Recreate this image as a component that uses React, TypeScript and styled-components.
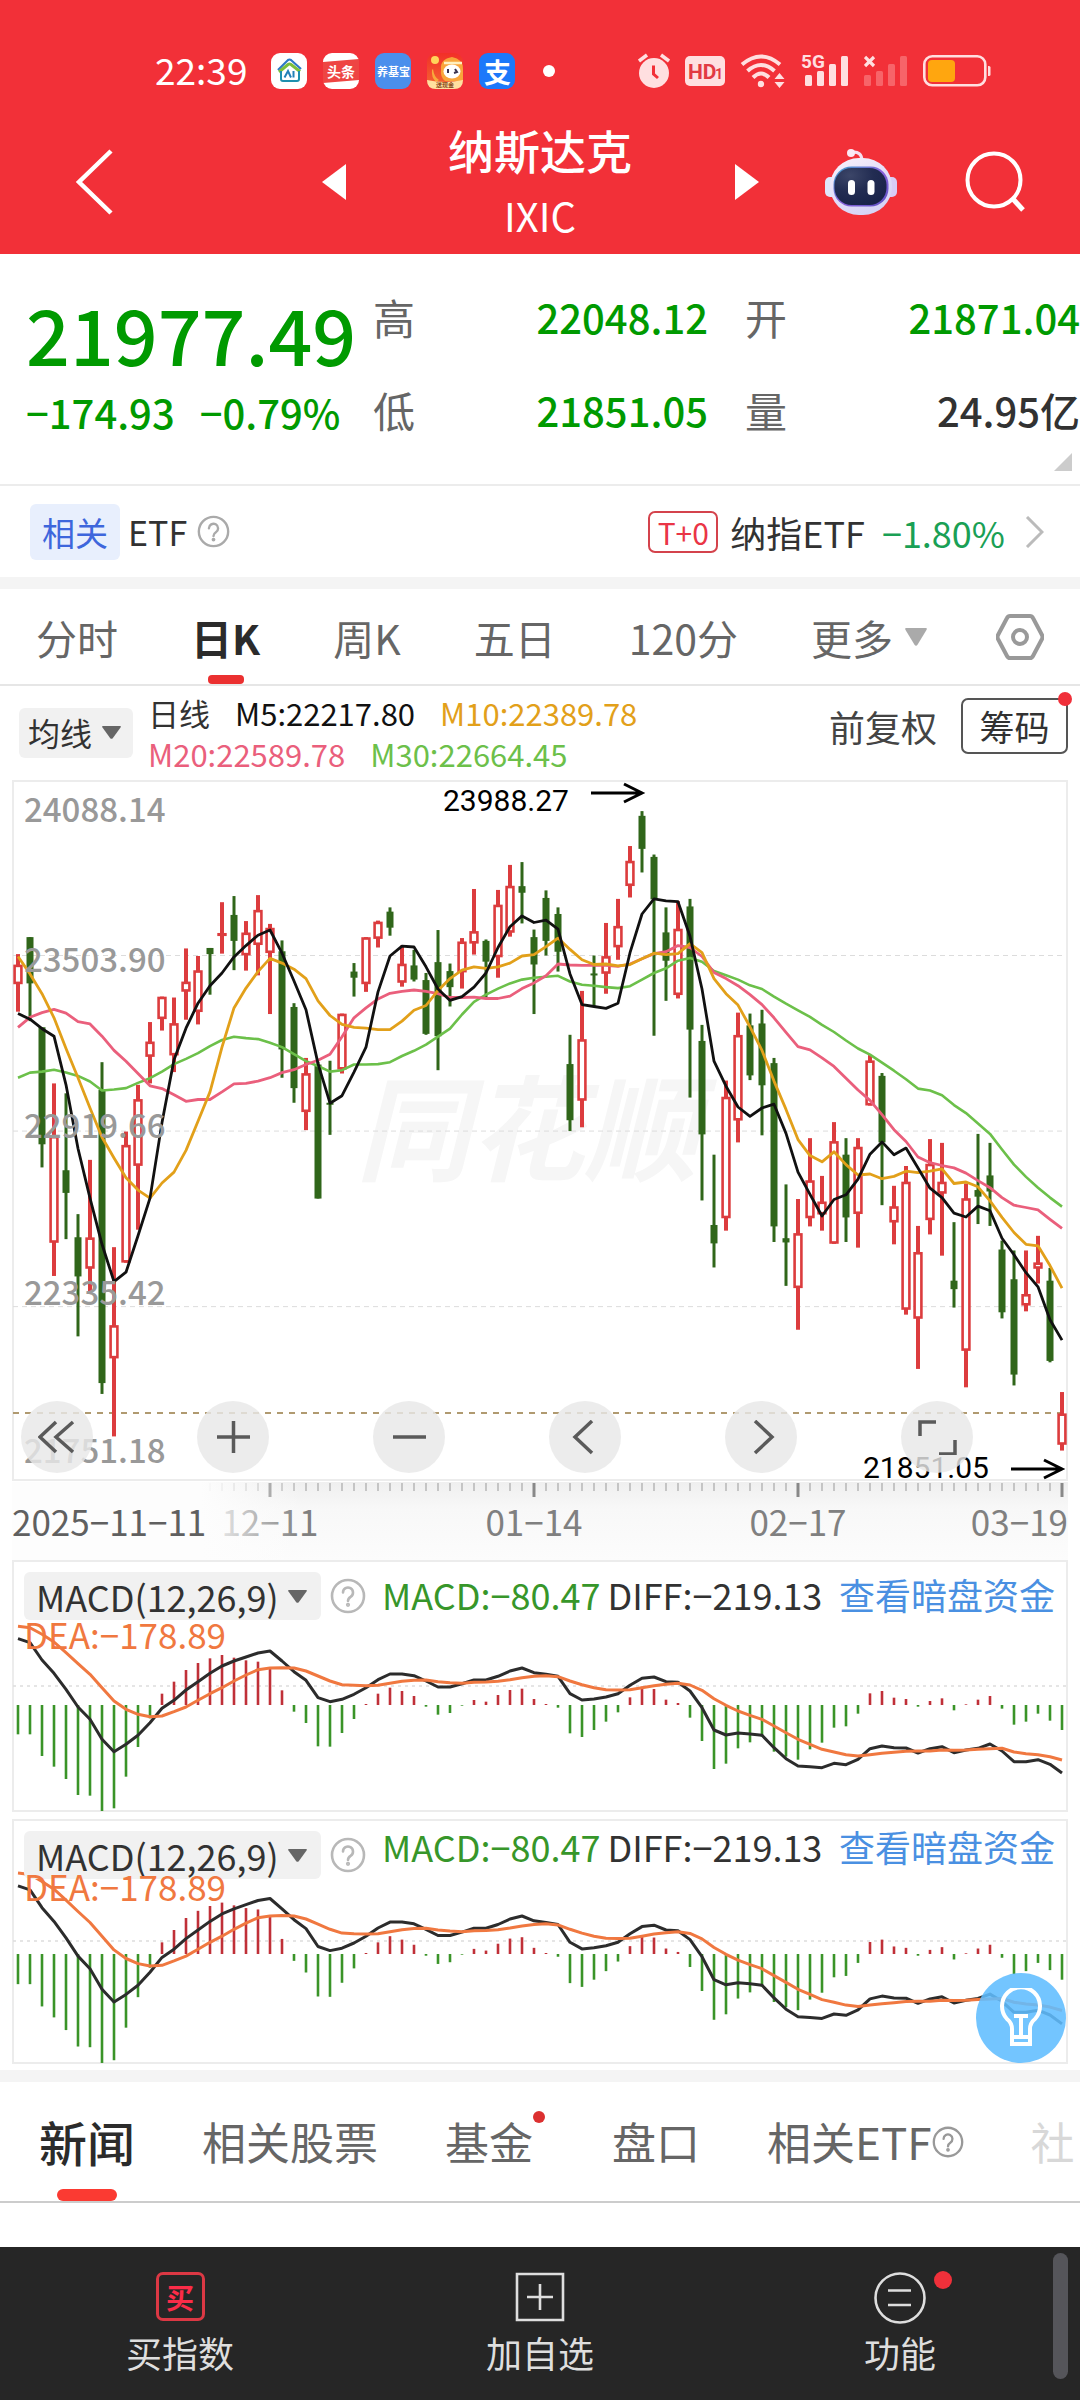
import React from "react";
import styled, { createGlobalStyle } from "styled-components";

const GlobalStyle = createGlobalStyle`
  * { box-sizing: border-box; }
  body {
    margin: 0;
    background: #fff;
    color: #323232;
    font-family: "Noto Sans CJK SC", "Noto Sans", sans-serif;
  }
  button, select { font: inherit; color: inherit; background: none; border: 0; padding: 0; margin: 0; cursor: pointer; }
  a { color: inherit; text-decoration: none; }
  svg { display: block; flex-shrink: 0; }
`;

/* ---------- market data ---------- */

type Candle = ["r" | "g", number, number, number, number];

// direction, high, body top, body bottom, low (chart levels, counted downwards)
const candles: Candle[] = [
  ["r", 388, 410, 452, 510], ["g", 352, 352, 450, 530], ["g", 543, 543, 791, 840], ["r", 662, 773, 1000, 1070],
  ["g", 683, 846, 894, 992], ["g", 939, 988, 1071, 1198], ["r", 824, 988, 1055, 1105], ["g", 617, 676, 1297, 1320],
  ["r", 1009, 1174, 1245, 1410], ["r", 764, 792, 1042, 1042], ["r", 665, 695, 837, 972], ["r", 532, 573, 606, 662],
  ["r", 478, 478, 526, 550], ["r", 480, 534, 603, 638], ["r", 376, 446, 468, 527], ["r", 392, 422, 511, 537],
  ["g", 375, 375, 388, 474], ["r", 278, 343, 350, 387], ["g", 265, 305, 360, 422], ["r", 318, 342, 391, 423],
  ["r", 263, 294, 369, 433], ["r", 324, 332, 386, 515], ["g", 359, 382, 590, 650], ["g", 492, 500, 672, 703],
  ["r", 608, 640, 723, 761], ["g", 616, 622, 906, 906], ["g", 614, 703, 707, 771], ["r", 514, 514, 633, 641],
  ["g", 407, 425, 438, 478], ["r", 352, 352, 452, 468], ["r", 317, 319, 356, 374], ["g", 289, 298, 332, 349],
  ["r", 370, 408, 449, 457], ["g", 379, 412, 442, 446], ["g", 428, 443, 557, 559], ["g", 337, 405, 562, 634],
  ["g", 408, 424, 458, 499], ["r", 354, 361, 427, 461], ["r", 250, 339, 366, 389], ["g", 357, 360, 404, 481],
  ["r", 252, 283, 395, 438], ["r", 199, 243, 343, 351], ["g", 193, 244, 258, 323], ["g", 336, 352, 410, 515],
  ["g", 253, 269, 360, 391], ["g", 289, 303, 383, 425], ["g", 559, 621, 740, 763], ["r", 466, 568, 699, 755],
  ["g", 391, 429, 433, 500], ["r", 322, 392, 430, 472], ["r", 271, 328, 374, 400], ["r", 159, 190, 244, 268],
  ["g", 85, 95, 165, 215], ["g", 177, 182, 272, 561], ["g", 289, 342, 402, 487], ["r", 276, 334, 475, 482],
  ["g", 271, 287, 548, 692], ["g", 538, 572, 770, 910], ["g", 813, 962, 1001, 1052], ["r", 656, 690, 948, 974],
  ["r", 512, 559, 741, 787], ["g", 514, 539, 645, 655], ["g", 506, 535, 666, 772], ["g", 608, 619, 965, 998],
  ["g", 876, 990, 999, 1091], ["r", 907, 979, 1096, 1184], ["r", 778, 867, 948, 965], ["r", 858, 912, 940, 974],
  ["r", 744, 784, 1002, 1002], ["g", 778, 813, 946, 998], ["r", 778, 796, 939, 1010], ["r", 602, 613, 709, 709],
  ["g", 640, 646, 787, 920], ["r", 879, 922, 957, 1003], ["r", 837, 870, 1142, 1152], ["r", 964, 1019, 1161, 1267],
  ["r", 780, 832, 952, 982], ["r", 788, 870, 896, 1027], ["g", 956, 1080, 1098, 1137], ["r", 874, 905, 1229, 1306],
  ["g", 769, 888, 902, 960], ["g", 788, 857, 891, 964], ["g", 995, 1014, 1147, 1160], ["g", 1016, 1077, 1279, 1302],
  ["r", 1016, 1108, 1133, 1145], ["r", 985, 1041, 1055, 1086], ["g", 1053, 1080, 1250, 1253], ["r", 1316, 1361, 1428, 1440],
];

const ma5 = [514, 526, 546, 562, 665, 800, 905, 1003, 1082, 1062, 985, 905, 745, 612, 545, 492, 455, 428, 394, 370, 348, 337, 386, 445, 506, 620, 704, 688, 638, 585, 468, 392, 371, 373, 415, 462, 486, 478, 458, 428, 374, 330, 307, 321, 316, 335, 430, 495, 499, 503, 492, 385, 303, 271, 275, 277, 350, 462, 615, 668, 712, 732, 714, 706, 768, 850, 897, 943, 908, 898, 865, 812, 786, 813, 799, 841, 884, 904, 937, 945, 922, 932, 990, 1025, 1063, 1093, 1163, 1206];
const ma10 = [393, 430, 472, 523, 588, 650, 714, 776, 820, 862, 888, 905, 873, 850, 804, 742, 680, 585, 502, 460, 425, 397, 407, 420, 440, 487, 518, 537, 543, 545, 548, 548, 530, 507, 497, 465, 440, 422, 415, 418, 415, 407, 392, 389, 372, 354, 378, 400, 410, 409, 413, 410, 398, 386, 389, 387, 366, 385, 440, 472, 496, 542, 592, 657, 717, 781, 815, 828, 807, 834, 856, 854, 864, 859, 848, 851, 848, 843, 874, 871, 881, 911, 946, 978, 1003, 1006, 1048, 1096];
const ma20 = [543, 522, 512, 505, 513, 531, 536, 562, 592, 615, 641, 667, 673, 686, 700, 696, 696, 680, 663, 662, 657, 650, 639, 633, 622, 613, 600, 563, 523, 502, 483, 471, 467, 464, 467, 472, 480, 480, 479, 482, 482, 477, 461, 449, 434, 409, 411, 412, 412, 412, 414, 409, 398, 387, 383, 370, 374, 393, 427, 440, 455, 474, 495, 523, 554, 584, 591, 608, 626, 651, 676, 698, 728, 760, 785, 818, 830, 836, 841, 852, 868, 883, 904, 920, 925, 930, 950, 969];
const ma30 = [650, 639, 637, 633, 639, 646, 658, 677, 675, 672, 661, 651, 637, 621, 610, 598, 583, 570, 563, 566, 568, 576, 585, 600, 615, 625, 637, 634, 622, 622, 621, 617, 604, 593, 580, 563, 546, 516, 489, 474, 461, 450, 442, 438, 436, 434, 446, 453, 455, 458, 460, 456, 442, 428, 418, 402, 396, 404, 424, 433, 442, 454, 462, 478, 493, 507, 521, 538, 553, 571, 588, 601, 618, 635, 653, 673, 677, 687, 708, 725, 747, 769, 802, 834, 860, 883, 904, 923];

const macdBars = [-88, -88, -153, -185, -222, -270, -272, -318, -310, -215, -126, -40, 34, 70, 105, 126, 140, 150, 142, 134, 130, 110, 44, -20, -54, -124, -125, -84, -42, 3, 34, 52, 42, 27, -5, -29, -24, -2, 15, 10, 30, 45, 49, 18, 3, -8, -85, -96, -75, -50, -22, 23, 55, 48, 16, 6, -38, -108, -192, -176, -130, -112, -95, -140, -155, -164, -133, -113, -68, -64, -26, 35, 42, 22, 18, -5, 12, 20, -16, 2, 16, 27, -11, -59, -50, -26, -47, -75];
const diff = [503, 515, 567, 607, 655, 708, 745, 805, 842, 820, 793, 755, 712, 688, 657, 632, 607, 585, 570, 558, 546, 540, 570, 602, 628, 680, 692, 685, 670, 650, 626, 609, 609, 614, 630, 648, 648, 638, 627, 627, 616, 600, 591, 605, 610, 616, 668, 687, 684, 678, 668, 643, 622, 618, 632, 634, 660, 710, 777, 792, 786, 789, 793, 830, 863, 885, 887, 890, 877, 881, 865, 833, 825, 830, 831, 846, 833, 827, 845, 837, 832, 819, 840, 872, 872, 866, 880, 906];
const dea = [466, 470, 490, 513, 545, 578, 610, 650, 690, 715, 730, 737, 735, 722, 708, 688, 668, 650, 630, 612, 596, 591, 590, 591, 600, 615, 630, 641, 643, 644, 643, 637, 631, 628, 627, 632, 635, 637, 634, 633, 631, 626, 620, 616, 614, 617, 630, 641, 650, 656, 657, 656, 650, 644, 640, 637, 642, 658, 683, 703, 720, 733, 745, 765, 785, 805, 820, 835, 843, 851, 855, 851, 847, 844, 841, 840, 840, 837, 838, 837, 835, 833, 832, 843, 848, 851, 857, 867];

const xAt = (i: number) => 6 + i * 12;
const levelY = (v: number) => v / 2.119 - 9;
const toPoints = (values: number[], y: (v: number) => number) =>
  values.map((v, i) => `${xAt(i)},${y(v).toFixed(1)}`).join(" ");

/* ---------- header ---------- */

const Page = styled.div`
  width: 100%;
  overflow-x: hidden;
  background: #fff;
`;

const TopArea = styled.header`
  background: #f23038;
  color: #fff;
  padding-top: 50px;
`;

const StatusBar = styled.div`
  display: flex;
  align-items: center;
  height: 42px;
  padding: 0 89px 0 155px;
`;

const Clock = styled.time`
  font-size: 37px;
  line-height: 36px;
  padding-bottom: 4px;
  margin-right: 24px;
`;

const StatusGroup = styled.div<{ $gap: number; $end?: boolean }>`
  display: flex;
  align-items: center;
  gap: ${(p) => p.$gap}px;
  margin-left: ${(p) => (p.$end ? "auto" : "0")};
`;

const AppBadge = styled.span<{ $bg: string; $size: number }>`
  display: flex;
  align-items: center;
  justify-content: center;
  width: 36px;
  height: 36px;
  border-radius: 9px;
  background: ${(p) => p.$bg};
  font-size: ${(p) => p.$size}px;
  line-height: 1;
  font-weight: 700;
  white-space: nowrap;
`;

const MoreDot = styled.span`
  width: 12px;
  height: 12px;
  margin-left: 12px;
  border-radius: 50%;
  background: #fff;
`;

const TitleBar = styled.div`
  display: grid;
  grid-template-columns: 1fr 437px 1fr;
  align-items: center;
  height: 162px;
  padding-top: 17px;
`;

const TitleSide = styled.div<{ $end?: boolean }>`
  display: flex;
  align-items: center;
  justify-content: ${(p) => (p.$end ? "flex-end" : "flex-start")};
  gap: 68px;
  padding: ${(p) => (p.$end ? "0 54px 0 0" : "0 0 0 74px")};
`;

const TitleCenter = styled.div`
  display: flex;
  align-items: center;
  justify-content: space-between;
`;

const TitleText = styled.div`
  text-align: center;
`;

const IndexName = styled.h1`
  margin: 0;
  font-size: 46px;
  line-height: 60px;
  font-weight: 500;
`;

const IndexCode = styled.div`
  font-size: 40px;
  line-height: 60px;
  padding-top: 6px;
`;

/* ---------- quote ---------- */

const Quote = styled.section`
  position: relative;
  display: flex;
  height: 232px;
  padding-left: 26px;
  border-bottom: 2px solid #ececec;
`;

const PriceBlock = styled.div`
  width: 347px;
  padding-top: 36px;
  color: #009a00;
  font-weight: 500;
  white-space: nowrap;
`;

const Price = styled.div`
  font-size: 77px;
  line-height: 86px;
`;

const Change = styled.div`
  display: flex;
  gap: 25px;
  margin-top: 8px;
  font-size: 40px;
  line-height: 56px;
`;

const Stats = styled.dl`
  flex: 1;
  display: grid;
  grid-template-columns: 42px 1fr 79px 1fr;
  grid-template-rows: 93px 93px;
  align-items: center;
  margin: 0;
  padding-top: 16px;
`;

const StatLabel = styled.dt`
  font-size: 42px;
  line-height: 60px;
  color: #666;
  text-align: right;
`;

const StatValue = styled.dd<{ $plain?: boolean }>`
  margin: 0;
  font-size: 40px;
  line-height: 60px;
  font-weight: 500;
  text-align: right;
  white-space: nowrap;
  color: ${(p) => (p.$plain ? "#323232" : "#009a00")};
`;

const CornerMark = styled.span`
  position: absolute;
  right: 8px;
  bottom: 13px;
  border-left: 18px solid transparent;
  border-bottom: 18px solid #ccc;
`;

const EtfRow = styled.section`
  display: flex;
  align-items: center;
  height: 91px;
  padding: 0 36px 0 30px;
`;

const RelatedTag = styled.span`
  padding: 0 12px;
  margin-right: 8px;
  border-radius: 6px;
  background: #e8effd;
  color: #3e66dc;
  font-size: 33px;
  line-height: 56px;
`;

const EtfTitle = styled.span`
  font-size: 34px;
  line-height: 50px;
  margin-right: 10px;
`;

const EtfLink = styled.a`
  display: flex;
  align-items: center;
  margin-left: auto;
  font-size: 36px;
  line-height: 50px;
`;

const TradeTag = styled.span`
  width: 70px;
  margin-right: 12px;
  border: 2px solid #d4434c;
  border-radius: 7px;
  color: #ea3546;
  font-size: 30px;
  line-height: 38px;
  text-align: center;
`;

const EtfChange = styled.span`
  margin: 0 20px 0 17px;
  color: #1aa055;
`;

const Band = styled.div`
  height: 12px;
  background: #f4f4f4;
`;

/* ---------- period tabs ---------- */

const PeriodBar = styled.nav`
  display: flex;
  justify-content: space-between;
  height: 97px;
  padding: 0 36px;
  border-bottom: 2px solid #e6e6e6;
`;

const PeriodTabs = styled.div`
  display: flex;
  align-items: stretch;
  gap: 73px;
`;

const PeriodTab = styled.button<{ $active?: boolean }>`
  position: relative;
  font-size: 41px;
  line-height: 92px;
  white-space: nowrap;
  color: ${(p) => (p.$active ? "#2b2b2b" : "#666")};
  font-weight: ${(p) => (p.$active ? 700 : 400)};
  &::after {
    content: "";
    display: ${(p) => (p.$active ? "block" : "none")};
    position: absolute;
    left: calc(50% - 18px);
    bottom: 0;
    width: 36px;
    height: 9px;
    border-radius: 4px;
    background: #eb3030;
  }
`;

const DropDown = styled.label<{ $gap: number }>`
  display: flex;
  align-items: center;
  gap: ${(p) => p.$gap}px;
  white-space: nowrap;
  select { appearance: none; outline: none; }
`;

const MoreSelect = styled(DropDown)`
  font-size: 41px;
  line-height: 92px;
  color: #666;
`;

/* ---------- moving averages ---------- */

const AverageBar = styled.section`
  display: flex;
  align-items: center;
  height: 94px;
  padding: 0 12px 0 19px;
`;

const AverageSelect = styled(DropDown)`
  height: 50px;
  padding: 0 12px 2px 9px;
  margin-right: 15px;
  border-radius: 6px;
  background: #f1f1f1;
  font-size: 32px;
  line-height: 46px;
`;

const AverageValues = styled.div`
  font-size: 31px;
  line-height: 41px;
  white-space: nowrap;
`;

const AverageLine = styled.div`
  display: flex;
  gap: 25px;
`;

const Colored = styled.span<{ $color: string }>`
  color: ${(p) => p.$color};
`;

const AdjustButton = styled.button`
  margin: 0 24px 14px auto;
  font-size: 36px;
  line-height: 50px;
  color: #444;
`;

const ChipButton = styled.button`
  position: relative;
  width: 107px;
  margin-bottom: 14px;
  border: 2px solid #555;
  border-radius: 7px;
  font-size: 35px;
  line-height: 52px;
`;

const Badge = styled.span<{ $top: number; $right: number; $size: number }>`
  position: absolute;
  top: ${(p) => p.$top}px;
  right: ${(p) => p.$right}px;
  width: ${(p) => p.$size}px;
  height: ${(p) => p.$size}px;
  border-radius: 50%;
  background: #f0303a;
`;

/* ---------- charts ---------- */

const Charts = styled.section`
  position: relative;
  padding: 0 12px 6px;
`;

const ChartBox = styled.div`
  position: relative;
`;

const Drawing = styled.svg`
  width: 100%;
  height: auto;
`;

const ChartControls = styled.div`
  position: absolute;
  left: 9px;
  right: 95px;
  bottom: 9px;
  display: flex;
  justify-content: space-between;
`;

const RoundButton = styled.button`
  display: flex;
  align-items: center;
  justify-content: center;
  width: 72px;
  height: 72px;
  border-radius: 50%;
  background: rgba(232, 232, 232, 0.82);
`;

const Panel = styled.div<{ $gapAbove?: boolean }>`
  display: grid;
  margin-top: ${(p) => (p.$gapAbove ? 7 : 0)}px;
  & > * { grid-area: 1 / 1; }
`;

const PanelHead = styled.div`
  padding: 12px 13px 0 12px;
`;

const PanelRow = styled.div`
  display: flex;
  align-items: center;
  height: 48px;
  font-size: 36px;
  white-space: nowrap;
`;

const IndicatorSelect = styled(DropDown)`
  height: 48px;
  padding: 0 14px 0 12px;
  border-radius: 6px;
  background: #f1f1f1;
  line-height: 46px;
`;

const HelpButton = styled.button`
  margin: 0 16px 0 9px;
`;

const PanelValues = styled.div<{ $raised?: boolean }>`
  flex: 1;
  display: flex;
  gap: 7px;
  align-self: flex-start;
  line-height: ${(p) => (p.$raised ? 31 : 44)}px;
`;

const FundLink = styled.a`
  margin-left: auto;
  color: #4a90e2;
`;

const PanelSub = styled.div<{ $raised?: boolean }>`
  margin-top: ${(p) => (p.$raised ? -9 : -2)}px;
  font-size: 35px;
  line-height: 32px;
  color: #f07840;
`;

const BulbButton = styled.button`
  position: absolute;
  right: 14px;
  bottom: 7px;
  width: 90px;
  height: 90px;
  display: flex;
  align-items: center;
  justify-content: center;
  border-radius: 50%;
  background: rgba(96, 189, 255, 0.88);
`;

/* ---------- news tabs and bottom bar ---------- */

const NewsTabs = styled.nav`
  display: flex;
  gap: 67px;
  height: 121px;
  padding-left: 39px;
  border-bottom: 2px solid #ccc;
  overflow: hidden;
`;

const NewsTab = styled.button<{ $active?: boolean; $faded?: boolean }>`
  position: relative;
  display: flex;
  align-items: center;
  flex-shrink: 0;
  font-size: ${(p) => (p.$active ? 48 : 44)}px;
  line-height: 117px;
  color: ${(p) => (p.$active ? "#2b2b2b" : p.$faded ? "#d8d8d8" : "#666")};
  font-weight: ${(p) => (p.$active ? 500 : 400)};
  &::after {
    content: "";
    display: ${(p) => (p.$active ? "block" : "none")};
    position: absolute;
    left: calc(50% - 30px);
    bottom: 0;
    width: 60px;
    height: 12px;
    border-radius: 6px;
    background: #fb3a32;
  }
`;

const InlineDot = styled.span`
  align-self: flex-start;
  width: 12px;
  height: 12px;
  margin: 29px 0 0 0;
  border-radius: 50%;
  background: #dc3030;
`;

const NewsBody = styled.main`
  height: 44px;
`;

const BottomBar = styled.footer`
  position: relative;
  display: grid;
  grid-template-columns: repeat(3, 1fr);
  height: 153px;
  background: #262626;
  color: #dedede;
`;

const BottomItem = styled.button`
  display: flex;
  flex-direction: column;
  align-items: center;
  gap: 4px;
  padding-top: 25px;
  font-size: 36px;
  line-height: 52px;
`;

const BottomIcon = styled.span`
  position: relative;
  height: 50px;
`;

const BuyIcon = styled.span`
  display: flex;
  align-items: center;
  justify-content: center;
  width: 49px;
  height: 49px;
  border: 3px solid #dc3844;
  border-radius: 7px;
  color: #fb2c48;
  font-size: 28px;
  line-height: 1;
  font-weight: 700;
`;

const ScrollThumb = styled.span`
  position: absolute;
  right: 12px;
  top: 6px;
  width: 15px;
  height: 126px;
  border-radius: 8px;
  background: #55555a;
`;

/* ---------- icons ---------- */

const Caret = ({ color, width, height }: { color: string; width: number; height: number }) => (
  <svg width={width} height={height} viewBox="0 0 20 18" preserveAspectRatio="none" aria-hidden="true">
    <path d="M1 0H19Q20.500 0 19.500 2L11.500 16.500Q10 19 8.500 16.500L.5 2Q-.5 0 1 0Z" fill={color} />
  </svg>
);

const QuestionIcon = ({ size, color = "#aaa" }: { size: number; color?: string }) => (
  <svg width={size} height={size} viewBox="0 0 36 36" fill="none" stroke={color} strokeWidth="2.600" aria-hidden="true">
    <circle cx="18" cy="18" r="16" />
    <path d="M13 14.500a5 5 0 1 1 7.600 4.300c-1.800 1.100-2.600 1.900-2.600 4.200" strokeLinecap="round" />
    <circle cx="18" cy="26.800" r=".8" fill={color} />
  </svg>
);

const HouseIcon = () => (
  <svg width="36" height="36" viewBox="0 0 36 36" fill="none">
    <rect width="36" height="36" rx="9" fill="#fff" />
    <path d="M7 17L17 7q1.500-1 3 0l10 9" stroke="#2d78c8" strokeWidth="2.200" />
    <path d="M8 19L17 11.500q1.500-1 3 0l9 7" stroke="#7bbf3c" strokeWidth="3" />
    <path d="M10 18v8q0 2 2 2h14q2 0 2-2v-8" stroke="#1e8fae" strokeWidth="2" />
    <path d="M13.500 24.500L17 18l3 6.500M22.500 18v6.500" stroke="#2380b8" strokeWidth="2" />
  </svg>
);

const HeadlineIcon = () => (
  <svg width="36" height="36" viewBox="0 0 36 36">
    <rect width="36" height="36" rx="9" fill="#fff" />
    <path d="M0 9L36 6V27L0 30Z" fill="#ee4543" />
    <text x="18" y="24" textAnchor="middle" fontSize="14" fontWeight="700" fill="#fff">头条</text>
  </svg>
);

const MascotIcon = () => (
  <svg width="36" height="36" viewBox="0 0 36 36">
    <defs>
      <linearGradient id="mascotBg" x1="0" y1="0" x2="0" y2="1">
        <stop offset="0" stopColor="#f22f28" />
        <stop offset="1" stopColor="#f46a32" />
      </linearGradient>
    </defs>
    <rect width="36" height="36" rx="9" fill="url(#mascotBg)" />
    <path d="M6 16q1 8 6 11l-3 2q-5-5-4-12z" fill="#f8a93c" />
    <circle cx="8" cy="7" r="4" fill="#ffd45a" />
    <path d="M14 16q-1-10 11-12 11 2 11 12v12H18q-5-4-4-12z" fill="#f9a53b" />
    <path d="M17 10h18" stroke="#fff0c0" strokeWidth="2.500" />
    <ellipse cx="25" cy="18.500" rx="8.500" ry="7" fill="#fff" />
    <path d="M21 16v4M28 16l2 3-3 1" stroke="#3a3350" strokeWidth="2" fill="none" />
    <path d="M0 27q18 4 36 0q0 9-9 9H9q-9 0-9-9z" fill="#ffe0a0" />
    <text x="18" y="34" textAnchor="middle" fontSize="6" fontWeight="700" fill="#8a4a20">送现金</text>
  </svg>
);

const AlarmIcon = () => (
  <svg width="32" height="36" viewBox="0 0 32 36" fill="none">
    <circle cx="16" cy="20" r="15" fill="#ffdfe0" />
    <path d="M1 8l8-6M31 8l-8-6" stroke="#ffdfe0" strokeWidth="3.500" />
    <path d="M15.500 12.500v8.500l4.500 4" stroke="#f23038" strokeWidth="3" />
  </svg>
);

const HdIcon = () => (
  <svg width="40" height="30" viewBox="0 0 40 30">
    <rect width="40" height="30" rx="5" fill="#ffdfe0" />
    <text x="3" y="22.500" fontFamily="Roboto" fontSize="21" fontWeight="700" fill="#e23a42">HD</text>
    <text x="30" y="22.500" fontFamily="Roboto" fontSize="14" fontWeight="700" fill="#e23a42">1</text>
  </svg>
);

const WifiIcon = () => (
  <svg width="46" height="36" viewBox="0 0 46 36" fill="none" stroke="#ffdfe0" strokeWidth="4">
    <path d="M2 11.500q19-16 38 0" />
    <path d="M7.500 18q13.500-12 27 0" />
    <path d="M13 24.500q8-8 16 0" />
    <circle cx="21" cy="31" r="3.200" fill="#ffdfe0" stroke="none" />
    <path d="M39.500 20l5 6h-10zM39.500 35l5-6h-10z" fill="#ffdfe0" stroke="none" />
  </svg>
);

const SignalIcon = ({ empty }: { empty?: boolean }) => (
  <svg width={empty ? 44 : 48} height="36" viewBox={empty ? "0 0 44 36" : "0 0 48 36"}>
    {[0, 1, 2, 3].map((i) => {
      const h = [11, 15, 22, 30][i];
      return <rect key={i} x={(empty ? 0 : 4) + i * 12} y={33 - h} width="7" height={h} rx="1.500" fill={empty ? "#f76469" : "#ffdfe0"} />;
    })}
    {empty ? (
      <path d="M1 4l9 9M10 4l-9 9" stroke="#ffdfe0" strokeWidth="3.200" />
    ) : (
      <text x="0" y="15" fontFamily="Roboto" fontSize="19" fontWeight="700" fill="#ffdfe0">5G</text>
    )}
  </svg>
);

const BatteryIcon = () => (
  <svg width="68" height="32" viewBox="0 0 68 32" fill="none">
    <rect x="1.300" y="1.300" width="61" height="29" rx="8" stroke="#ffdfe0" strokeWidth="2.600" />
    <rect x="5" y="5" width="27" height="22" rx="4" fill="#ffa60f" />
    <path d="M65 11h1q1.500 0 1.500 1.500v7q0 1.500-1.500 1.500h-1z" fill="#ffdfe0" />
  </svg>
);

const RobotIcon = () => (
  <svg width="72" height="68" viewBox="0 0 72 68" fill="none">
    <defs>
      <linearGradient id="shell" x1="0" y1="0" x2=".6" y2="1">
        <stop offset="0" stopColor="#fbf4fb" />
        <stop offset=".6" stopColor="#e2dcf8" />
        <stop offset="1" stopColor="#d6d4f6" />
      </linearGradient>
      <linearGradient id="visorEdge" x1="0" y1="0" x2="1" y2="1">
        <stop offset="0" stopColor="#3aa0c8" />
        <stop offset=".5" stopColor="#8a62dc" />
        <stop offset="1" stopColor="#5a50c0" />
      </linearGradient>
      <radialGradient id="visor" cx=".3" cy=".2" r=".9">
        <stop offset="0" stopColor="#3c4668" />
        <stop offset=".5" stopColor="#222c52" />
        <stop offset="1" stopColor="#182248" />
      </radialGradient>
    </defs>
    <path d="M26 4.500q11-2 11 9" stroke="#f6dff0" strokeWidth="3.200" />
    <circle cx="26" cy="5" r="4" fill="#fbe8f4" />
    <rect x="0" y="29" width="12" height="20" rx="5" fill="#dfe6fa" />
    <rect x="60" y="29" width="12" height="20" rx="5" fill="#d8ccf6" />
    <rect x="5" y="10" width="62" height="57" rx="29" fill="url(#shell)" />
    <rect x="8.500" y="18.500" width="55" height="40" rx="18" fill="url(#visorEdge)" />
    <rect x="9.500" y="20" width="52" height="37" rx="17" fill="url(#visor)" />
    <rect x="23" y="32" width="7" height="15" rx="3.500" fill="#fff" />
    <rect x="42.500" y="32" width="7" height="15" rx="3.500" fill="#fff" />
  </svg>
);

const CONTROL_ICONS: [string, string][] = [
  ["最早", "M18 2L2 17L18 32M35 2L18 17L35 32"],
  ["放大", "M3 17H36M19.500 1V33"],
  ["缩小", "M3 17H36"],
  ["向左", "M26 1L9 17L26 33"],
  ["向右", "M13 1L30 17L13 33"],
  ["全屏", "M2 16V2H18M37 20V34H21"],
];

/* ---------- chart drawings ---------- */

const LINES: [number[], string, number][] = [
  [ma30, "#6cc04a", 2.6],
  [ma20, "#ea5f7c", 2.8],
  [ma10, "#e2a01a", 2.8],
  [ma5, "#111", 2.8],
];

const PRICE_LABELS: [string, number][] = [
  ["24088.14", 42],
  ["23503.90", 192],
  ["22919.66", 358],
  ["22335.42", 525],
  ["21751.18", 683],
];

const CandleChart = () => (
  <Drawing viewBox="0 0 1056 702" role="img" aria-label="日K线图">
    <rect x="1" y="1" width="1054" height="699" fill="none" stroke="#ececec" strokeWidth="2" />
    <text x="344" y="392" fontSize="114" fontWeight="700" fontStyle="italic" fill="#f6f6f6">同花顺</text>
    {[391, 763, 1135].map((v) => (
      <path key={v} d={`M1 ${levelY(v)}H1054`} stroke="#dcdcdc" strokeWidth="1" strokeDasharray="5 4" />
    ))}
    <path d="M1 633H1054" stroke="#b09a70" strokeWidth="2" strokeDasharray="6 6" />
    {candles.map(([dir, high, top, bottom, low], i) => {
      const x = xAt(i);
      const [h, t, b, l] = [high, top, bottom, low].map(levelY);
      if (dir === "g") {
        return (
          <g key={i} fill="#30661a">
            <rect x={x - 1.5} y={h} width="3" height={l - h} />
            <rect x={x - 3.5} y={t} width="7" height={Math.max(b - t, 2)} />
          </g>
        );
      }
      return (
        <g key={i}>
          <rect x={x - 2} y={h} width="4" height={l - h} fill="#dc3c3e" />
          <rect x={x - 3.4} y={t + 1.4} width="6.800" height={Math.max(b - t - 2.8, 0.5)} fill="#fff" stroke="#dc3c3e" strokeWidth="2.600" />
        </g>
      );
    })}
    {LINES.map(([values, color, width]) => (
      <polyline key={color} points={toPoints(values, levelY)} fill="none" stroke={color} strokeWidth={width} strokeLinejoin="round" />
    ))}
    {PRICE_LABELS.map(([label, y]) => (
      <text key={label} x="12" y={y} fontSize="33" fontWeight="500" fill="#999">{label}</text>
    ))}
    <g fontFamily="Roboto" fontSize="30" fill="#000">
      <text x="431" y="31">23988.27</text>
      <text x="851" y="698">21851.05</text>
    </g>
    <g fill="none" stroke="#000" strokeWidth="3">
      <path d="M579 13H630M612 4L630 13L612 22" />
      <path d="M999 689H1050M1032 680L1050 689L1032 698" />
    </g>
  </Drawing>
);

const DATES: [string, number][] = [["12−11", 258], ["01−14", 522], ["02−17", 786]];

const DateAxis = () => (
  <Drawing viewBox="0 0 1056 78" role="img" aria-label="日期轴">
    <defs>
      <linearGradient id="axisBg" x1="0" y1="0" x2="0" y2="1">
        <stop offset="0" stopColor="#efefef" />
        <stop offset=".35" stopColor="#f8f8f8" />
        <stop offset="1" stopColor="#fcfcfc" />
      </linearGradient>
      <linearGradient id="axisFade" x1="0" y1="0" x2="1" y2="0">
        <stop offset="0" stopColor="#fdfdfd" />
        <stop offset=".65" stopColor="#fdfdfd" />
        <stop offset="1" stopColor="#fdfdfd" stopOpacity="0" />
      </linearGradient>
    </defs>
    <rect width="1056" height="78" fill="url(#axisBg)" />
    {candles.map((_, i) => {
      const major = i % 22 === 21;
      return <path key={i} d={`M${xAt(i)} 1V${major ? 15 : 9}`} stroke={major ? "#888" : "#999"} strokeWidth={major ? 3 : 1} />;
    })}
    <g fontSize="35" fill="#808080">
      {DATES.map(([label, x]) => (
        <text key={label} x={x} y="54" textAnchor="middle">{label}</text>
      ))}
      <text x="1056" y="54" textAnchor="end">03−19</text>
      <rect width="290" height="78" fill="url(#axisFade)" />
      <text x="0" y="54" fill="#606060">2025−11−11</text>
    </g>
  </Drawing>
);

interface MacdProps {
  height: number;
  zero: number;
  guide: number;
  scale: number;
}

const MacdChart = ({ height, zero, guide, scale }: MacdProps) => {
  const y = (v: number) => zero + ((v - 702) / 3) * scale;
  return (
    <Drawing viewBox={`0 0 1056 ${height}`} role="img" aria-label="MACD图">
      <rect x="1" y="1" width="1054" height={height - 2} fill="none" stroke="#ececec" strokeWidth="2" />
      <path d={`M1 ${guide}H1054`} stroke="#ddd" strokeWidth="1.500" strokeDasharray="3 4" />
      {macdBars.map((v, i) => (
        <path key={i} d={`M${xAt(i)} ${zero}V${zero - (v / 3) * scale}`} stroke={v > 0 ? "#c03038" : "#3a9428"} strokeWidth="2.600" />
      ))}
      <polyline points={toPoints(diff, y)} fill="none" stroke="#2c2c2c" strokeWidth="3" strokeLinejoin="round" />
      <polyline points={toPoints(dea, y)} fill="none" stroke="#f07840" strokeWidth="3" strokeLinejoin="round" />
    </Drawing>
  );
};

const MacdPanel = ({ second, ...chart }: MacdProps & { second?: boolean }) => (
  <Panel $gapAbove={second}>
    <MacdChart {...chart} />
    <PanelHead>
      <PanelRow>
        <IndicatorSelect $gap={9}>
          <select aria-label="指标">
            <option>MACD(12,26,9)</option>
          </select>
          <Caret color="#666" width={19} height={13} />
        </IndicatorSelect>
        <HelpButton aria-label="指标说明"><QuestionIcon size={36} color="#b8b8b8" /></HelpButton>
        <PanelValues $raised={second}>
          <Colored $color="#37962a">MACD:−80.47</Colored>
          <span>DIFF:−219.13</span>
          <FundLink href="#fund">查看暗盘资金</FundLink>
        </PanelValues>
      </PanelRow>
      <PanelSub $raised={second}>DEA:−178.89</PanelSub>
    </PanelHead>
  </Panel>
);

/* ---------- page ---------- */

export default function App() {
  return (
    <Page>
      <GlobalStyle />
      <TopArea>
        <StatusBar>
          <Clock>22:39</Clock>
          <StatusGroup $gap={16}>
            <HouseIcon />
            <HeadlineIcon />
            <AppBadge $bg="#4b8fec" $size={11}>养基宝</AppBadge>
            <MascotIcon />
            <AppBadge $bg="#1c78fa" $size={27}>支</AppBadge>
            <MoreDot />
          </StatusGroup>
          <StatusGroup $gap={15} $end>
            <AlarmIcon />
            <HdIcon />
            <WifiIcon />
            <SignalIcon />
            <SignalIcon empty />
            <BatteryIcon />
          </StatusGroup>
        </StatusBar>
        <TitleBar>
          <TitleSide>
            <button aria-label="返回">
              <svg width="40" height="66" viewBox="0 0 40 66" fill="none" stroke="#fff" strokeWidth="4.500">
                <path d="M37 2L5 33L37 64" />
              </svg>
            </button>
          </TitleSide>
          <TitleCenter>
            <button aria-label="上一个">
              <svg width="24" height="36" viewBox="0 0 24 36"><path d="M24 0V36L0 18Z" fill="#fff" /></svg>
            </button>
            <TitleText>
              <IndexName>纳斯达克</IndexName>
              <IndexCode>IXIC</IndexCode>
            </TitleText>
            <button aria-label="下一个">
              <svg width="24" height="36" viewBox="0 0 24 36"><path d="M0 0V36L24 18Z" fill="#fff" /></svg>
            </button>
          </TitleCenter>
          <TitleSide $end>
            <button aria-label="智能助手"><RobotIcon /></button>
            <button aria-label="搜索">
              <svg width="61" height="61" viewBox="0 0 61 61" fill="none" stroke="#fff" strokeWidth="4">
                <circle cx="29" cy="29" r="26.500" />
                <path d="M48 48L58 59" strokeWidth="5" />
              </svg>
            </button>
          </TitleSide>
        </TitleBar>
      </TopArea>

      <Quote>
        <PriceBlock>
          <Price>21977.49</Price>
          <Change><span>−174.93</span><span>−0.79%</span></Change>
        </PriceBlock>
        <Stats>
          <StatLabel>高</StatLabel>
          <StatValue>22048.12</StatValue>
          <StatLabel>开</StatLabel>
          <StatValue>21871.04</StatValue>
          <StatLabel>低</StatLabel>
          <StatValue>21851.05</StatValue>
          <StatLabel>量</StatLabel>
          <StatValue $plain>24.95亿</StatValue>
        </Stats>
        <CornerMark />
      </Quote>

      <EtfRow>
        <RelatedTag>相关</RelatedTag>
        <EtfTitle>ETF</EtfTitle>
        <QuestionIcon size={33} />
        <EtfLink href="#etf">
          <TradeTag>T+0</TradeTag>
          <span>纳指ETF</span>
          <EtfChange>−1.80%</EtfChange>
          <svg width="19" height="32" viewBox="0 0 19 32" fill="none" stroke="#bbb" strokeWidth="3">
            <path d="M2 1L17 16L2 31" />
          </svg>
        </EtfLink>
      </EtfRow>
      <Band />

      <PeriodBar>
        <PeriodTabs>
          <PeriodTab>分时</PeriodTab>
          <PeriodTab $active>日K</PeriodTab>
          <PeriodTab>周K</PeriodTab>
          <PeriodTab>五日</PeriodTab>
          <PeriodTab>120分</PeriodTab>
          <MoreSelect $gap={12}>
            <select aria-label="更多周期">
              <option>更多</option>
            </select>
            <Caret color="#aaa" width={22} height={18} />
          </MoreSelect>
        </PeriodTabs>
        <button aria-label="图表设置">
          <svg width="48" height="46" viewBox="0 0 48 46" fill="none" stroke="#999" strokeWidth="4">
            <path d="M14 2H34Q36 2 37 4L46 21Q47 23 46 25L37 42Q36 44 34 44H14Q12 44 11 42L2 25Q1 23 2 21L11 4Q12 2 14 2Z" />
            <circle cx="24" cy="23" r="7" />
          </svg>
        </button>
      </PeriodBar>

      <AverageBar>
        <AverageSelect $gap={9}>
          <select aria-label="均线类型">
            <option>均线</option>
          </select>
          <Caret color="#666" width={19} height={13} />
        </AverageSelect>
        <AverageValues>
          <AverageLine>
            <span>日线</span>
            <Colored $color="#111">M5:22217.80</Colored>
            <Colored $color="#e2a01a">M10:22389.78</Colored>
          </AverageLine>
          <AverageLine>
            <Colored $color="#ea5f7c">M20:22589.78</Colored>
            <Colored $color="#6cc04a">M30:22664.45</Colored>
          </AverageLine>
        </AverageValues>
        <AdjustButton>前复权</AdjustButton>
        <ChipButton>
          筹码
          <Badge $top={-8} $right={-6} $size={14} />
        </ChipButton>
      </AverageBar>

      <Charts>
        <ChartBox>
          <CandleChart />
          <ChartControls>
            {CONTROL_ICONS.map(([label, d]) => (
              <RoundButton key={label} aria-label={label}>
                <svg width="39" height="35" viewBox="0 0 39 35" fill="none" stroke="#5a5a5a" strokeWidth="3.500">
                  <path d={d} />
                </svg>
              </RoundButton>
            ))}
          </ChartControls>
        </ChartBox>
        <DateAxis />
        <MacdPanel height={252} zero={145} guide={126} scale={1} />
        <MacdPanel height={245} zero={135} guide={122} scale={1.028} second />
        <BulbButton aria-label="提示">
          <svg width="44" height="60" viewBox="0 0 44 60" fill="none" stroke="#fff" strokeWidth="4">
            <path d="M13 41q0-6-5-10a19 19 0 1 1 28 0q-5 4-5 10v15H13z" />
            <path d="M13 49H31M15 28H29M22 28V49" />
          </svg>
        </BulbButton>
      </Charts>
      <Band />

      <NewsTabs>
        <NewsTab $active>新闻</NewsTab>
        <NewsTab>相关股票</NewsTab>
        <NewsTab>基金<InlineDot /></NewsTab>
        <NewsTab>盘口</NewsTab>
        <NewsTab>相关ETF<QuestionIcon size={32} color="#999" /></NewsTab>
        <NewsTab $faded>社</NewsTab>
      </NewsTabs>
      <NewsBody />

      <BottomBar>
        <BottomItem>
          <BottomIcon><BuyIcon>买</BuyIcon></BottomIcon>
          买指数
        </BottomItem>
        <BottomItem>
          <BottomIcon>
            <svg width="50" height="50" viewBox="0 0 50 50" fill="none" stroke="#dedede" strokeWidth="2.600">
              <path d="M2 2H48V48H2ZM12 25H38M25 12V38" />
            </svg>
          </BottomIcon>
          加自选
        </BottomItem>
        <BottomItem>
          <BottomIcon>
            <svg width="52" height="52" viewBox="0 0 52 52" fill="none" stroke="#dedede" strokeWidth="2.600">
              <circle cx="26" cy="26" r="24.500" />
              <path d="M14 18.500H37M14 33H37" />
            </svg>
            <Badge $top={-1} $right={-26} $size={18} />
          </BottomIcon>
          功能
        </BottomItem>
        <ScrollThumb />
      </BottomBar>
    </Page>
  );
}
